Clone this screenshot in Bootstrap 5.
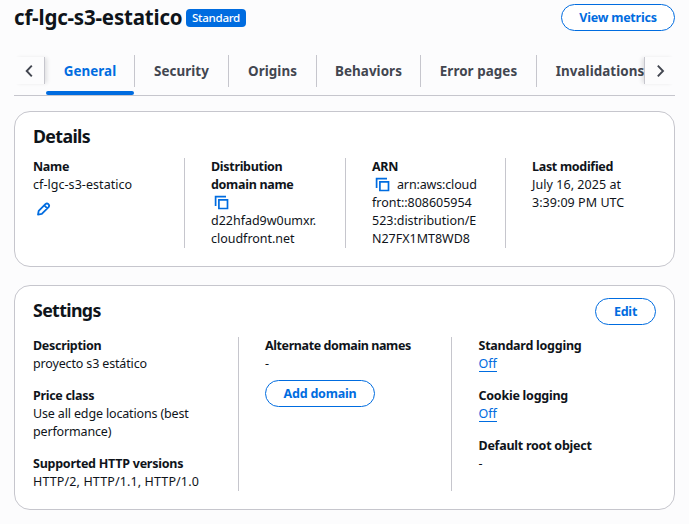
<!DOCTYPE html>
<html lang="en">
<head>
<meta charset="utf-8">
<meta name="viewport" content="width=device-width, initial-scale=1">
<title>cf-lgc-s3-estatico</title>
<link href="https://cdn.jsdelivr.net/npm/bootstrap@5.3.0/dist/css/bootstrap.min.css" rel="stylesheet">
<script src="https://cdn.jsdelivr.net/npm/bootstrap@5.3.0/dist/js/bootstrap.bundle.min.js" defer></script>
<style>
  :root { --ink: #0f141a; --blue: #006ce0; --line: #c6c6cd; --muted: #424650; }
  body { font-family: "Noto Sans", "Open Sans", sans-serif; font-size: 12.5px; line-height: 18px; color: var(--ink); background: #fcfcfd; height: 524px; overflow: hidden; letter-spacing: -.02px; }
  .page { padding: 0 14px; }
  .topbar { height: 55px; padding-top: 4px; }
  .page-title { font-size: 20.5px; line-height: 27px; font-weight: 700; letter-spacing: -.2px; width: 172px; white-space: nowrap; }
  .plan-badge { background: var(--blue); font-size: 11.6px; line-height: 17px; height: 18px; width: 60px; padding: 0; font-weight: 500; border-radius: 4px; margin-top: 5px; letter-spacing: -.3px; }
  .btn-pill { --bs-btn-color: var(--blue); --bs-btn-border-color: var(--blue); --bs-btn-bg: #fff; --bs-btn-hover-color: #002b66; --bs-btn-hover-border-color: #002b66; --bs-btn-hover-bg: #f0fbff; height: 27px; padding: 0; border-width: 1.5px; border-radius: 14px; font-size: 12.5px; line-height: 24px; font-weight: 700; white-space: nowrap; letter-spacing: -.22px; }
  .btn-metrics { width: 114px; } .btn-edit { width: 61px; } .btn-domain { width: 110px; margin-top: 7px; }
  .tabstrip { height: 41px; border-bottom: 1px solid var(--line); }
  .scroll-btn { width: 31px; height: 27px; margin-top: 2px; flex: none; border: 0; padding: 0; background: #fcfcfd; color: var(--muted); z-index: 1; }
  .scroll-btn svg { display: block; }
  .scroll-left { border-right: 1px solid var(--line); box-shadow: 3px 0 4px -1px #0f141a1f; margin-right: 1px; }
  .scroll-right { border-left: 1px solid var(--line); box-shadow: -3px 0 4px -1px #0f141a1f; }
  .tab-list { width: 598px; overflow: hidden; }
  .tab-list .nav-link { flex: none; height: 32px; padding: 0; color: var(--muted); font-size: 13.4px; line-height: 32px; font-weight: 700; text-align: center; border-right: 1px solid var(--line); border-radius: 0; white-space: nowrap; letter-spacing: .06px; }
  .tab-list .nav-link.active { color: var(--blue); }
  .tab-general { width: 89px; } .tab-security { width: 94px; } .tab-origins { width: 88px; }
  .tab-behaviors { width: 104px; } .tab-errors { width: 116px; }
  .tab-list .tab-inval { width: 126px; border: 0; }
  .active-bar { height: 4px; width: 88px; margin-top: 4px; background: var(--blue); border-radius: 2px; }
  .panel { background: #fff; border: 1px solid var(--line); border-radius: 16px; padding: 0 18px; }
  .panel-details { margin-top: 15px; height: 156px; }
  .panel-settings { margin-top: 18px; height: 225px; }
  .panel-title { font-size: 17.8px; line-height: 22px; font-weight: 700; margin: 0; letter-spacing: -.65px; }
  .panel-details .panel-title { padding-top: 13px; height: 46px; }
  .settings-head { height: 51px; padding-top: 12px; }
  .settings-head .panel-title { margin-top: 1px; }
  .cols-grid { display: grid; }
  .details-grid { grid-template-columns: 152px 161px 160px 1fr; height: 90px; }
  .settings-grid { grid-template-columns: 206px 213px 1fr; height: 154px; }
  .cell { border-right: 1px solid var(--line); padding-left: 26px; white-space: nowrap; }
  .cell:first-child { padding-left: 0; }
  .cell:last-child { border: 0; }
  .settings-grid .cell:last-child { padding-left: 26.5px; }
  .field { display: flow-root; }
  .field + .field { margin-top: 14px; }
  .field-label { font-weight: 700; letter-spacing: -.3px; }
  .label-wide { letter-spacing: -.25px; }
  .label-tight { letter-spacing: -.4px; }
  .versions { letter-spacing: .13px; }
  .text-snug { letter-spacing: -.15px; }
  .text-loose { letter-spacing: .05px; }
  .off-link { color: var(--blue); text-decoration: none; border-bottom: 1px solid var(--blue); display: block; width: 18px; line-height: 18px; height: 17px; margin-bottom: 1px; }
  .copy-icon { display: inline-block; vertical-align: top; margin: 1px 7px 0 3px; }
  .edit-icon { display: block; margin: 7px 0 0 4px; }
</style>
</head>
<body>
<div class="page">
  <header class="topbar d-flex align-items-start">
    <h1 class="page-title m-0">cf-lgc-s3-estatico</h1>
    <span class="badge plan-badge">Standard</span>
    <button type="button" class="btn btn-pill btn-metrics ms-auto">View metrics</button>
  </header>

  <div class="tabstrip d-flex">
    <button type="button" class="scroll-btn scroll-left" aria-label="Scroll left"><svg width="30" height="27" fill="none" stroke="currentColor" stroke-width="1.9"><path d="M17.8 8.7 12.7 14l5.1 5.3"/></svg></button>
    <div class="tab-list">
      <nav class="nav flex-nowrap">
        <a class="nav-link active tab-general" href="#">General</a>
        <a class="nav-link tab-security" href="#">Security</a>
        <a class="nav-link tab-origins" href="#">Origins</a>
        <a class="nav-link tab-behaviors" href="#">Behaviors</a>
        <a class="nav-link tab-errors" href="#">Error pages</a>
        <a class="nav-link tab-inval" href="#">Invalidations</a>
      </nav>
      <div class="active-bar"></div>
    </div>
    <button type="button" class="scroll-btn scroll-right" aria-label="Scroll right"><svg width="30" height="27" fill="none" stroke="currentColor" stroke-width="1.9"><path d="m12.8 8.7 5.2 5.3-5.2 5.3"/></svg></button>
  </div>

  <section class="panel panel-details">
    <h2 class="panel-title">Details</h2>
    <div class="cols-grid details-grid">
      <div class="cell">
        <div class="field-label">Name</div>
        <div class="text-loose">cf-lgc-s3-estatico</div>
        <svg class="edit-icon" width="14" height="15" fill="none" stroke="#006ce0" stroke-width="1.8" stroke-linejoin="round"><path d="M1 13.6 1.7 9.8 8.4 3.1Q10 1.8 11.4 3.1T11.6 6.2L4.8 12.9ZM7.3 4.4l3 3"/></svg>
      </div>
      <div class="cell">
        <div class="field-label">Distribution<br>domain name</div>
        <div><svg class="copy-icon" width="15" height="15" fill="none" stroke="#006ce0" stroke-width="1.7"><path d="M1.6 11V1.6H12M4.9 4.9h8.6v8.6H4.9z"/></svg><br>d22hfad9w0umxr.<br>cloudfront.net</div>
      </div>
      <div class="cell">
        <div class="field-label">ARN</div>
        <div><svg class="copy-icon" width="15" height="15" fill="none" stroke="#006ce0" stroke-width="1.7"><path d="M1.6 11V1.6H12M4.9 4.9h8.6v8.6H4.9z"/></svg><span class="text-snug">arn:aws:cloud</span><br>front::808605954<br>523:distribution/E<br>N27FX1MT8WD8</div>
      </div>
      <div class="cell">
        <div class="field-label">Last modified</div>
        <div class="text-loose">July 16, 2025 at<br>3:39:09 PM UTC</div>
      </div>
    </div>
  </section>

  <section class="panel panel-settings">
    <div class="settings-head d-flex justify-content-between align-items-start">
      <h2 class="panel-title">Settings</h2>
      <button type="button" class="btn btn-pill btn-edit">Edit</button>
    </div>
    <div class="cols-grid settings-grid">
      <div class="cell">
        <div class="field"><div class="field-label">Description</div><div class="text-snug">proyecto s3 estático</div></div>
        <div class="field"><div class="field-label">Price class</div><div class="text-snug">Use all edge locations (best<br>performance)</div></div>
        <div class="field"><div class="field-label label-wide">Supported HTTP versions</div><div class="versions">HTTP/2, HTTP/1.1, HTTP/1.0</div></div>
      </div>
      <div class="cell">
        <div class="field-label label-tight">Alternate domain names</div>
        <div>-</div>
        <button type="button" class="btn btn-pill btn-domain">Add domain</button>
      </div>
      <div class="cell">
        <div class="field"><div class="field-label label-wide">Standard logging</div><a class="off-link" href="#">Off</a></div>
        <div class="field"><div class="field-label label-wide">Cookie logging</div><a class="off-link" href="#">Off</a></div>
        <div class="field"><div class="field-label label-wide">Default root object</div><div>-</div></div>
      </div>
    </div>
  </section>
</div>
</body>
</html>
